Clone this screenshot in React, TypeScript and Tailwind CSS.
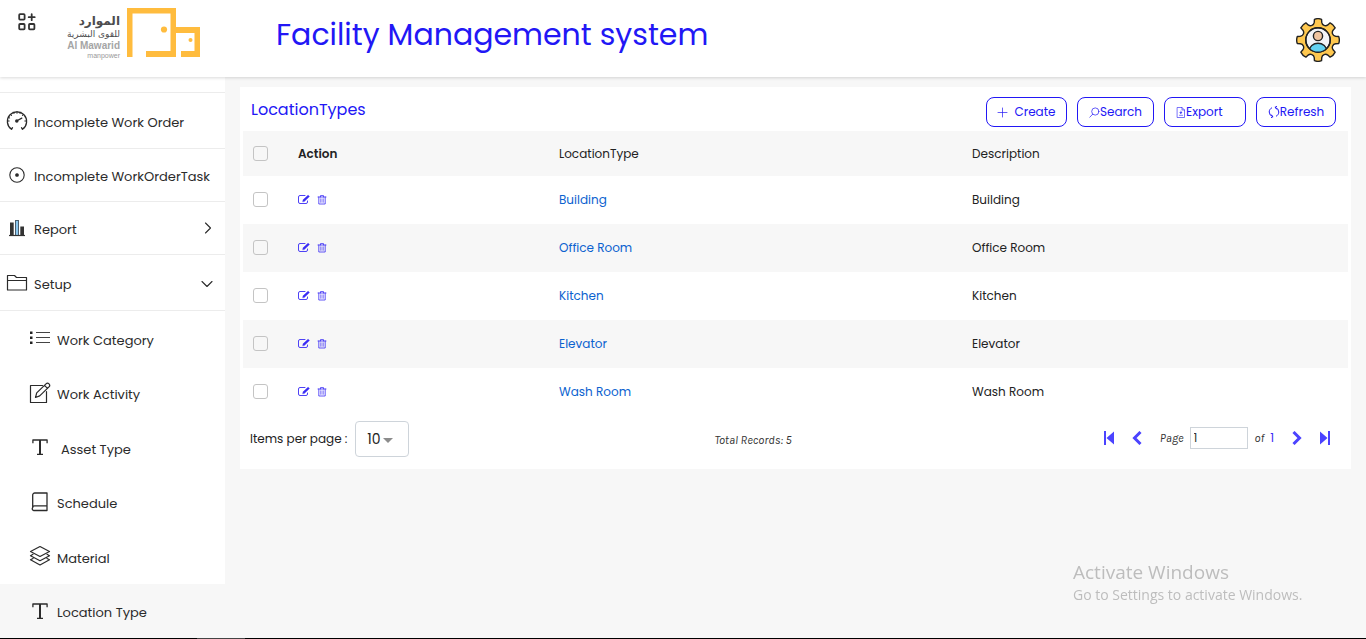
import { useState } from "react";
import type { ReactNode } from "react";

type IconProps = { className?: string };

const stroke = {
  fill: "none",
  stroke: "currentColor",
  strokeLinecap: "round" as const,
  strokeLinejoin: "round" as const,
  "aria-hidden": true,
};

function GaugeIcon() {
  return (
    <svg className="shrink-0" width="22" height="22" viewBox="0 0 22 22" {...stroke} strokeWidth="1.3">
      <path d="M5.5 19.3A9.6 9.6 0 1 1 16.5 19.3M5.5 19.3l1-1.6M16.5 19.3l-1-1.6" />
      <path d="M11 1.5v1.8M4.3 4.3l1.3 1.3M17.7 4.3l-1.3 1.3M1.5 11h1.7M20.5 11h-1.7M2.3 7.4l1.4.6M7.4 2.2l.6 1.4M14.6 2.2l-.6 1.4" strokeWidth="1" />
      <path d="M11 10.8l4.8-2.7" />
      <circle cx="10.8" cy="11" r="1.1" fill="currentColor" />
    </svg>
  );
}

function TargetIcon() {
  return (
    <svg className="shrink-0" width="22" height="22" viewBox="0 0 22 22" {...stroke} strokeWidth="1.1">
      <circle cx="11" cy="11" r="7.2" />
      <circle cx="11" cy="11" r="1.3" fill="currentColor" />
    </svg>
  );
}

function ReportIcon() {
  return (
    <svg className="shrink-0" width="22" height="22" viewBox="0 0 22 22" aria-hidden="true">
      <rect x="4" y="5.500" width="3.700" height="13" fill="#333" />
      <rect x="9.500" y="3.500" width="3" height="15" fill="#8cc8ef" stroke="#4a5f70" />
      <rect x="14.300" y="9.500" width="3.700" height="9" fill="#333" />
      <path d="M3 18.500h16" stroke="#333" strokeWidth="1.200" />
    </svg>
  );
}

function FolderIcon() {
  return (
    <svg className="shrink-0" width="22" height="22" viewBox="0 0 22 22" {...stroke} strokeWidth="1.2">
      <path d="M1.500 18V3.500H8.500L10.500 5.500H20.500V18H1.500zM1.500 8.500H20.500" />
    </svg>
  );
}

function ListIcon() {
  return (
    <svg className="shrink-0" width="22" height="22" viewBox="0 0 22 22" aria-hidden="true">
      <path d="M7 5.500h14M7 10.500h14M7 15.500h14" stroke="#444" />
      <path d="M1 4.500h2.500v2.500H1zM1 9.500h2.500v2.500H1zM1 14.500h2.500v2.500H1z" fill="#222" />
    </svg>
  );
}

function EditIcon() {
  return (
    <svg className="shrink-0" width="22" height="22" viewBox="0 0 22 22" {...stroke} strokeWidth="1.2">
      <path d="M13.500 3.500H1.500V20.500H17.500V9.500" />
      <path d="M6.500 15.500l1.200-4.600 9.300-9a2.100 2.100 0 0 1 3 3l-9.300 9zM15.500 3.300l3 3" />
    </svg>
  );
}

function TypeIcon() {
  return (
    <svg className="shrink-0" width="22" height="22" viewBox="0 0 22 22" {...stroke} strokeWidth="1.3" strokeLinecap="butt">
      <path d="M3.900 7.300V4H18.100V7.300M8 18.300h6" />
      <path d="M11 4v14.300" strokeWidth="2" />
    </svg>
  );
}

function BookIcon() {
  return (
    <svg className="shrink-0" width="22" height="22" viewBox="0 0 22 22" {...stroke} strokeWidth="1.3">
      <path d="M18 14.800H5.500a1.800 1.800 0 0 0-1.800 1.800V4A2 2 0 0 1 5.700 2H18V19.500H5.500a1.800 1.800 0 0 1-1.800-2.900" />
    </svg>
  );
}

function LayersIcon() {
  return (
    <svg className="shrink-0" width="22" height="22" viewBox="0 0 22 22" {...stroke} strokeWidth="1.2">
      <path d="M11 1.500L20.500 6.500 11 11.500 1.500 6.500z" />
      <path d="M4 9.300L1.500 10.700 11 15.700l9.500-5L18 9.300M4 13.400L1.500 14.800 11 20l9.500-5.200L18 13.400" />
    </svg>
  );
}

function Chevron({ className }: IconProps) {
  return (
    <svg className={className} width="12" height="12" viewBox="0 0 12 12" {...stroke} strokeWidth="1.1">
      <path d="M4.500 1l5 5-5 5" />
    </svg>
  );
}

function AppsIcon() {
  return (
    <svg width="18" height="18" viewBox="0 0 18 18" {...stroke} strokeWidth="1.8">
      <rect x="1.200" y="1.200" width="5.400" height="5.400" rx="0.800" />
      <rect x="1.200" y="11" width="5.400" height="5.400" rx="0.800" />
      <rect x="11" y="11" width="5.400" height="5.400" rx="0.800" />
      <path d="M13.700 1.200v6M10.700 4.200h6" />
    </svg>
  );
}

function LogoMark() {
  return (
    <svg className="shrink-0" width="73" height="49" viewBox="0 0 73 49" fill="#ffbc3e" aria-hidden="true">
      <path d="M0 0H49V19H73V49H54V43H67.500V25H49V49H19V43H43.500V5.500H5.500V49H0z" />
      <circle cx="37" cy="21.500" r="3.100" />
      <circle cx="63.500" cy="32" r="2" />
    </svg>
  );
}

function buildGear(): string {
  const at = (r: number, a: number) => `${(22 + r * Math.cos(a)).toFixed(2)} ${(22 + r * Math.sin(a)).toFixed(2)}`;
  let d = "";
  for (let i = 0; i < 8; i++) {
    const a = (i * Math.PI) / 4;
    d += `${i === 0 ? "M" : "L"}${at(21, a - 0.17)}Q${at(22, a)} ${at(21, a + 0.17)}`;
    d += `L${at(18, a + 0.21)}A3.8 3.8 0 0 0 ${at(18, a + Math.PI / 4 - 0.21)}`;
  }
  return `${d}Z`;
}
const gearPath = buildGear();

function AdminIcon() {
  return (
    <svg width="44" height="44" viewBox="0 0 44 44" stroke="#222" strokeWidth="1.4" strokeLinejoin="round" aria-hidden="true">
      <clipPath id="admin-face">
        <circle cx="22" cy="22" r="12.200" />
      </clipPath>
      <path d={gearPath} fill="#ffc84f" />
      <circle cx="22" cy="22" r="12.200" fill="#f3f4f8" />
      <ellipse cx="22" cy="33" rx="8.800" ry="7.800" fill="#62d2f2" clipPath="url(#admin-face)" />
      <circle cx="22" cy="22" r="12.200" fill="none" />
      <circle cx="22" cy="18" r="4.600" fill="#f0c4a0" />
    </svg>
  );
}

function RowEditIcon() {
  return (
    <svg width="12" height="12" viewBox="0 0 12 12" {...stroke} strokeWidth="0.900">
      <path d="M7 1.500H2A1.500 1.500 0 0 0 .5 3v5A1.500 1.500 0 0 0 2 9.500h6A1.500 1.500 0 0 0 9.500 8V7" />
      <path d="M4.800 7.500l.3-1.700 5-4.600 1.300 1.300-4.900 4.700z" fill="currentColor" strokeWidth="0.500" />
    </svg>
  );
}

function RowTrashIcon() {
  return (
    <svg width="10" height="10" viewBox="0 0 10 10" {...stroke} strokeWidth="0.800">
      <path d="M1 2h8M3.500 2V.600h3V2M1.800 2V9H8.200V2M3.900 3.800v3.500M6.100 3.800v3.500" />
    </svg>
  );
}

function PlusIcon() {
  return (
    <svg width="11" height="11" viewBox="0 0 11 11" {...stroke} strokeWidth="0.700">
      <path d="M5.500 1v9M1 5.500h9" />
    </svg>
  );
}

function SearchIcon() {
  return (
    <svg width="11" height="11" viewBox="0 0 11 11" {...stroke} strokeWidth="0.700">
      <circle cx="6.300" cy="4.500" r="3.600" />
      <path d="M3.700 7.200L.800 10.200" />
    </svg>
  );
}

function ExportIcon() {
  return (
    <svg width="10" height="11" viewBox="0 0 10 11" {...stroke} strokeWidth="0.600">
      <path d="M1.500.500H6L8.500 3v7.500h-7zM6 .500V3h2.500M5 4V5.500M3.500 8.300h3" />
      <path d="M4.200 5.500h1.600L5 6.500z" fill="currentColor" />
    </svg>
  );
}

function RefreshIcon() {
  return (
    <svg width="12" height="12" viewBox="0 0 12 12" {...stroke} strokeWidth="1">
      <path d="M4.800 10.600A4.800 4.800 0 0 1 1.200 6C1.200 4.200 2.200 2.700 3.600 1.900M7.200 1.400A4.800 4.800 0 0 1 10.800 6c0 1.800-1 3.300-2.400 4.100" />
      <path d="M3.300 9l1.700 1.600-1.700 1.100M8.700.300L7 1.400 8.700 3" />
    </svg>
  );
}

type NavItem = { label: string; icon: ReactNode; arrow?: "right" | "down"; height?: string };

const mainItems: NavItem[] = [
  { label: "Incomplete Work Order", icon: <GaugeIcon />, height: "h-14" },
  { label: "Incomplete WorkOrderTask", icon: <TargetIcon />, height: "h-[53px]" },
  { label: "Report", icon: <ReportIcon />, arrow: "right", height: "h-[53px]" },
  { label: "Setup", icon: <FolderIcon />, arrow: "down", height: "h-14" },
];

const setupItems: NavItem[] = [
  { label: "Work Category", icon: <ListIcon /> },
  { label: "Work Activity", icon: <EditIcon /> },
  { label: "Asset Type", icon: <TypeIcon /> },
  { label: "Schedule", icon: <BookIcon /> },
  { label: "Material", icon: <LayersIcon /> },
  { label: "Location Type", icon: <TypeIcon /> },
];

const rows = ["Building", "Office Room", "Kitchen", "Elevator", "Wash Room"];

function Header() {
  return (
    <header className="relative flex h-[77px] shrink-0 items-start bg-white shadow-[0_1px_3px_rgba(0,0,0,0.15)]">
      <button type="button" aria-label="Toggle menu" className="ml-[18px] mt-[13px] text-[#333]">
        <AppsIcon />
      </button>
      <a href="#home" className="ml-7 mt-2 flex w-[136px] items-start justify-end gap-[7px]">
        <span className="flex flex-col items-end whitespace-nowrap pt-[6px]">
          <span lang="ar" dir="rtl" className="font-['DejaVu_Sans',sans-serif] text-[12px] font-bold leading-[15px] text-[#4d4d4f]">الموارد</span>
          <span lang="ar" dir="rtl" className="font-['DejaVu_Sans',sans-serif] text-[9px] leading-[11px] text-[#4d4d4f]">للقوى البشرية</span>
          <span className="font-['Liberation_Sans',sans-serif] text-[10px] font-bold leading-[12px] text-[#a5a5a5]">Al Mawarid</span>
          <span className="font-['Liberation_Sans',sans-serif] text-[7px] leading-[8px] text-[#999]">manpower</span>
        </span>
        <LogoMark />
      </a>
      <h1 className="ml-[76px] mt-4 whitespace-nowrap text-[30px] leading-[38px] text-[#2217f5]">
        Facility Management system
      </h1>
      <button type="button" aria-label="Account settings" className="ml-auto mr-[26px] mt-[18px]">
        <AdminIcon />
      </button>
    </header>
  );
}

function Sidebar() {
  return (
    <nav aria-label="Main" className="flex w-[225px] shrink-0 flex-col bg-white text-[13px] text-[#2b2b2b]">
      <div className="h-4 shrink-0 border-b border-[#ececec]" />
      {mainItems.map((item) => (
        <a
          key={item.label}
          href="#menu"
          className={`flex shrink-0 items-center gap-[6px] border-b border-[#ececec] pl-[6px] pr-3 ${item.height}`}
        >
          {item.icon}
          <span className="mt-1 whitespace-nowrap">{item.label}</span>
          {item.arrow === "right" && <Chevron className="ml-auto" />}
          {item.arrow === "down" && <Chevron className="ml-auto rotate-90" />}
        </a>
      ))}
      <div className="flex flex-1 flex-col">
        {setupItems.map((item) => (
          <a
            key={item.label}
            href="#setup"
            className={`flex min-h-12 flex-1 items-center gap-[6px] pl-[29px] ${item.label === "Location Type" ? "bg-[#f7f7f7]" : ""}`}
          >
            {item.icon}
            <span className={item.label === "Asset Type" ? "mt-1 pl-1" : "mt-1"}>{item.label}</span>
          </a>
        ))}
      </div>
    </nav>
  );
}

const toolButton =
  "flex h-[30px] items-center rounded-lg border border-[#2217f5] text-[12px] text-[#2217f5]";

const checkbox =
  "block size-[15px] appearance-none rounded-[3px] border border-[#c4c4c4] bg-transparent checked:bg-[#4b43ff]";

function LocationTable() {
  return (
    <table className="w-full table-fixed text-left text-[12px] text-[#222]">
      <colgroup>
        <col className="w-[45px]" />
        <col className="w-[261px]" />
        <col className="w-[413px]" />
        <col />
      </colgroup>
      <thead>
        <tr className="h-[45px] bg-[#f7f7f7]">
          <th className="pl-[10px]">
            <input type="checkbox" aria-label="Select all" className={checkbox} />
          </th>
          <th className="pl-[10px] font-semibold">Action</th>
          <th className="pl-[10px] font-normal">LocationType</th>
          <th className="pl-[10px] font-normal">Description</th>
        </tr>
      </thead>
      <tbody>
        {rows.map((name) => (
          <tr key={name} className="h-12 bg-white even:bg-[#f7f7f7]">
            <td className="pb-px pl-[10px]">
              <input type="checkbox" aria-label={`Select ${name}`} className={checkbox} />
            </td>
            <td className="pb-px pl-[10px]">
              <span className="flex items-center gap-[7px] text-[#3a2cf5]">
                <button type="button" aria-label={`Edit ${name}`}>
                  <RowEditIcon />
                </button>
                <button type="button" aria-label={`Delete ${name}`}>
                  <RowTrashIcon />
                </button>
              </span>
            </td>
            <td className="pl-[10px]">
              <a href="#location" className="text-[#0b62cf]">{name}</a>
            </td>
            <td className="pl-[10px]">{name}</td>
          </tr>
        ))}
      </tbody>
    </table>
  );
}

function Pager() {
  const [page, setPage] = useState("1");
  return (
    <footer className="grid h-[53px] grid-cols-[43%_1fr_auto] items-start pl-[7px] pr-[18px] pt-[5px]">
      <div className="flex items-center gap-2">
        <label htmlFor="page-size" className="text-[12px] text-[#222]">Items per page :</label>
        <span className="relative">
          <select
            id="page-size"
            defaultValue="10"
            className="h-9 w-[54px] appearance-none rounded border border-[#ced4da] bg-white pl-[11px] text-[14px] text-[#222]"
          >
            <option>10</option>
            <option>25</option>
            <option>50</option>
          </select>
          <svg className="pointer-events-none absolute right-4 top-[17px]" width="10" height="5" viewBox="0 0 10 5" fill="#8c8c8c" aria-hidden="true">
            <path d="M0 0h10L5 5z" />
          </svg>
        </span>
      </div>
      <p className="pt-[10px] font-['Karla','Poppins',sans-serif] text-[12px] italic leading-[18px] text-[#333]">Total Records: 5</p>
      <div className="flex items-center justify-end pt-[6px] font-['Karla','Poppins',sans-serif] text-[12px] italic text-[#333]">
        <button type="button" aria-label="First page" className="text-[#4b43ff]">
          <svg width="10" height="14" viewBox="0 0 10 14" fill="currentColor" aria-hidden="true">
            <path d="M0 0h2v14H0zM10 0.500v13L2.500 7z" />
          </svg>
        </button>
        <button type="button" aria-label="Previous page" className="ml-[18px] text-[#4b43ff]">
          <svg width="10" height="14" viewBox="0 0 10 14" fill="none" stroke="currentColor" strokeWidth="3" aria-hidden="true">
            <path d="M8.500 1L2.500 7l6 6" />
          </svg>
        </button>
        <label htmlFor="page-number" className="ml-[18px]">Page</label>
        <input
          id="page-number"
          value={page}
          onChange={(event) => setPage(event.target.value)}
          className="ml-[6px] h-[22px] w-[58px] border border-[#ced4da] bg-white px-[3px] font-['Poppins',sans-serif] text-[12px] not-italic text-[#333]"
        />
        <span className="ml-[7px]">of</span>
        <span className="ml-[6px] font-['Poppins',sans-serif] not-italic text-[#3a2cf5]">1</span>
        <button type="button" aria-label="Next page" className="ml-[18px] text-[#4b43ff]">
          <svg width="10" height="14" viewBox="0 0 10 14" fill="none" stroke="currentColor" strokeWidth="3" aria-hidden="true">
            <path d="M1.500 1L7.500 7l-6 6" />
          </svg>
        </button>
        <button type="button" aria-label="Last page" className="ml-[18px] text-[#4b43ff]">
          <svg width="10" height="14" viewBox="0 0 10 14" fill="currentColor" aria-hidden="true">
            <path d="M8 0h2v14H8zM0 0.500v13L7.500 7z" />
          </svg>
        </button>
      </div>
    </footer>
  );
}

export default function App() {
  return (
    <div className="flex min-h-screen flex-col bg-[#f7f7f7] font-['Poppins','Inter',sans-serif]">
      <Header />
      <div className="flex flex-1">
        <Sidebar />
        <main className="min-w-0 flex-1 px-[15px] pt-[10px]">
          <section className="bg-white px-[3px]">
            <div className="flex h-11 items-start justify-between pl-2 pr-3 pt-[10px]">
              <h2 className="text-[16px] leading-[26px] text-[#2217f5]">LocationTypes</h2>
              <div className="flex gap-[10px]">
                <button type="button" className={`${toolButton} w-[81px] justify-center gap-[6px]`}>
                  <PlusIcon />
                  Create
                </button>
                <button type="button" className={`${toolButton} w-[77px] justify-center`}>
                  <SearchIcon />
                  Search
                </button>
                <button type="button" className={`${toolButton} w-[82px] pl-[11px]`}>
                  <ExportIcon />
                  Export
                </button>
                <button type="button" className={`${toolButton} w-20 justify-center`}>
                  <RefreshIcon />
                  Refresh
                </button>
              </div>
            </div>
            <LocationTable />
            <Pager />
          </section>
        </main>
      </div>
      <div className="flex h-px shrink-0 bg-black pl-[197px]">
        <div className="w-12 bg-[#444]" />
      </div>
      <aside className="pointer-events-none fixed bottom-[34px] right-[57px] whitespace-nowrap font-['Segoe_UI','Open_Sans',sans-serif] text-[#bdbdbd]">
        <div className="w-[236px]">
          <p className="text-[19px] leading-[26px]">Activate Windows</p>
          <p className="text-[14px] leading-5">Go to Settings to activate Windows.</p>
        </div>
      </aside>
    </div>
  );
}
